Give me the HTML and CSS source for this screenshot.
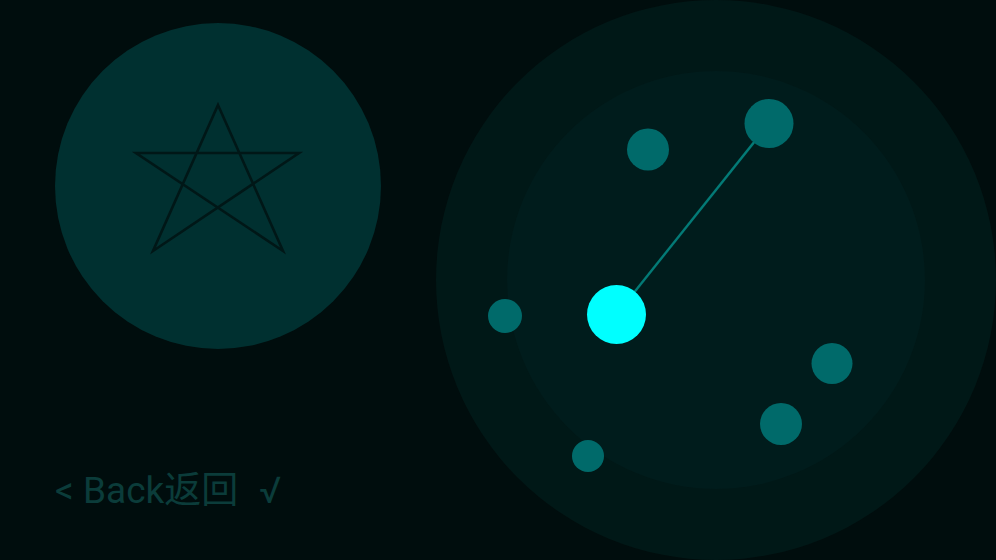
FILE: index.html
```html
<!DOCTYPE html>
<html>
<head>
<meta charset="utf-8">
<link rel="stylesheet" href="styles.css">
</head>
<body>
<div class="screen">
  <div class="left">
    <div class="badge">
      <svg class="star" width="326" height="326" viewBox="0 0 326 326">
        <polygon points="163,82 228,228 81,130 244,130 98,228" fill="none" stroke="#001717" stroke-width="2.6" stroke-linejoin="miter"/>
      </svg>
    </div>
    <div class="back"><span>&lt; Back返回</span><span class="check">√</span></div>
  </div>
  <div class="radar">
    <svg width="560" height="560" viewBox="0 0 560 560">
      <circle cx="280" cy="280" r="280" fill="#001817"/>
      <circle cx="280" cy="280" r="209" fill="#001c1c"/>
      <line x1="180.5" y1="314.5" x2="333" y2="123.5" stroke="#037a76" stroke-width="2.4"/>
      <circle cx="212" cy="149.5" r="21" fill="#006a6a"/>
      <circle cx="333" cy="123.5" r="24.5" fill="#006a6a"/>
      <circle cx="69" cy="316" r="17" fill="#006a6a"/>
      <circle cx="396" cy="363.5" r="20.5" fill="#006a6a"/>
      <circle cx="345" cy="424" r="21" fill="#006a6a"/>
      <circle cx="152" cy="456" r="16" fill="#006a6a"/>
      <circle cx="180.5" cy="314.5" r="29.5" fill="#00ffff"/>
    </svg>
  </div>
</div>
</body>
</html>
```
FILE: styles.css
```css
html, body {
  margin: 0;
  padding: 0;
  background: #000d0d;
}
.screen {
  display: flex;
  width: 996px;
  height: 560px;
  overflow: hidden;
}
.left {
  width: 436px;
  flex: none;
  display: flex;
  flex-direction: column;
  padding: 23px 0 0 55px;
  box-sizing: border-box;
}
.badge {
  width: 326px;
  height: 326px;
  border-radius: 50%;
  background: #003030;
}
.star {
  display: block;
}
.back {
  margin-top: 118px;
  font-family: Roboto, "Noto Sans CJK SC", sans-serif;
  font-size: 37px;
  line-height: 48px;
  color: #0b3c3a;
  white-space: nowrap;
  display: flex;
  gap: 21px;
}
.radar {
  width: 560px;
  height: 560px;
  flex: none;
}
.radar svg {
  display: block;
}
```
